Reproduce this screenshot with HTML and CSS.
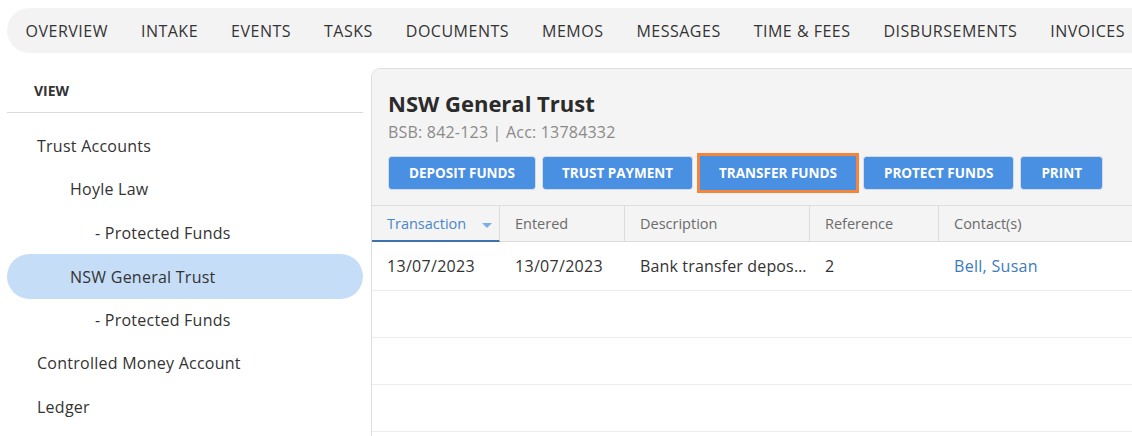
FILE: index.html
```html
<!DOCTYPE html>
<html>
<head>
<meta charset="utf-8">
<link rel="stylesheet" href="styles.css">
</head>
<body>
<nav class="topnav">
  <a class="tab">OVERVIEW</a>
  <a class="tab">INTAKE</a>
  <a class="tab">EVENTS</a>
  <a class="tab">TASKS</a>
  <a class="tab">DOCUMENTS</a>
  <a class="tab">MEMOS</a>
  <a class="tab">MESSAGES</a>
  <a class="tab">TIME &amp; FEES</a>
  <a class="tab">DISBURSEMENTS</a>
  <a class="tab">INVOICES</a>
</nav>
<div class="layout">
  <aside class="sidebar">
    <div class="side-head">VIEW</div>
    <ul class="side-list">
      <li class="lvl1">Trust Accounts</li>
      <li class="lvl2">Hoyle Law</li>
      <li class="lvl3">- Protected Funds</li>
      <li class="lvl2 selected">NSW General Trust</li>
      <li class="lvl3">- Protected Funds</li>
      <li class="lvl1">Controlled Money Account</li>
      <li class="lvl1">Ledger</li>
    </ul>
  </aside>
  <main class="panel">
    <div class="panel-head">
      <h1 class="title">NSW General Trust</h1>
      <div class="subtitle">BSB: 842-123 | Acc: 13784332</div>
      <div class="actions">
        <button class="btn">DEPOSIT FUNDS</button>
        <button class="btn">TRUST PAYMENT</button>
        <button class="btn highlighted">TRANSFER FUNDS</button>
        <button class="btn">PROTECT FUNDS</button>
        <button class="btn">PRINT</button>
      </div>
    </div>
    <div class="table">
      <div class="thead">
        <div class="th c1 sorted">Transaction<span class="caret"></span></div>
        <div class="th c2">Entered</div>
        <div class="th c3">Description</div>
        <div class="th c4">Reference</div>
        <div class="th c5">Contact(s)</div>
      </div>
      <div class="tr">
        <div class="td c1">13/07/2023</div>
        <div class="td c2">13/07/2023</div>
        <div class="td c3">Bank transfer deposit received</div>
        <div class="td c4">2</div>
        <div class="td c5"><a class="link">Bell, Susan</a></div>
      </div>
      <div class="tr"></div>
      <div class="tr"></div>
      <div class="tr"></div>
    </div>
  </main>
</div>
</body>
</html>
```
FILE: styles.css
```css
* { box-sizing: border-box; }
html, body { margin: 0; padding: 0; background: #fff; }
body {
  font-family: "Open Sans", "Noto Sans", sans-serif;
  color: #333;
  padding: 8px 0 0 7px;
  width: 1132px;
  height: 436px;
  overflow: hidden;
}
.topnav {
  display: flex;
  align-items: center;
  height: 45px;
  background: #f3f3f3;
  border-radius: 23px 0 0 23px;
  padding-left: 2px;
  white-space: nowrap;
}
.tab {
  padding: 0 16.5px;
  font-size: 16px;
  color: #333;
  letter-spacing: 0.5px;
}
.layout {
  display: flex;
  margin-top: 15px;
}
.sidebar {
  width: 356px;
  flex: none;
}
.side-head {
  height: 45px;
  line-height: 45px;
  padding-left: 27px;
  font-size: 14px;
  font-weight: 700;
  color: #333;
  border-bottom: 1px solid #dcdcdc;
}
.side-list {
  list-style: none;
  margin: 11px 0 0;
  padding: 0;
}
.side-list li {
  height: 43.5px;
  display: flex;
  align-items: center;
  font-size: 16px;
  letter-spacing: 0.25px;
  color: #333;
  border-radius: 23px;
}
.lvl1 { padding-left: 30px; }
.lvl2 { padding-left: 63px; }
.lvl3 { padding-left: 88px; }
.side-list li.selected { background: #c6ddf7; height: 45px; margin: -0.5px 0 -1px; }
.panel {
  flex: 1;
  margin-left: 8px;
  border: 1px solid #dedede;
  border-right: none;
  border-bottom: none;
  border-top-left-radius: 9px;
  overflow: hidden;
  height: 400px;
}
.panel-head {
  background: #f4f4f4;
  padding: 19px 16px 15px;
  border-bottom: 1px solid #dedede;
}
.title {
  margin: 0;
  font-size: 22px;
  font-weight: 700;
  line-height: 30px;
  color: #2b2b2b;
}
.subtitle {
  font-size: 16px;
  color: #8a8a8a;
  line-height: 26px;
  margin-top: 1px;
  letter-spacing: 0.2px;
}
.actions {
  display: flex;
  gap: 6px;
  margin-top: 11px;
}
.btn {
  height: 34px;
  padding: 0 20px;
  border: 1px solid #d3dce6;
  border-radius: 3px;
  background: #4a90e2;
  background-clip: padding-box;
  color: #fff;
  font-family: "Open Sans", "Noto Sans", sans-serif;
  font-size: 13.5px;
  font-weight: 700;
  white-space: nowrap;
}
.btn:nth-child(2) { padding: 0 19px; }
.btn.highlighted {
  border-color: #4a90e2;
  box-shadow: 0 0 0 3px #f3853d;
  border-radius: 0;
  padding: 0 18px;
  margin: 0 1px;
}
.thead {
  display: flex;
  height: 36px;
  background: #f4f4f4;
  border-bottom: 1px solid #dcdcdc;
}
.th {
  display: flex;
  align-items: center;
  padding-left: 15px;
  font-size: 14.5px;
  color: #6b6b6b;
  border-right: 1px solid #dcdcdc;
}
.th.c5 { border-right: none; }
.th.sorted {
  color: #4a86c8;
  border-bottom: 2px solid #3f72ad;
  margin-bottom: -1px;
  position: relative;
}
.caret {
  position: absolute;
  right: 7px;
  top: 17px;
  width: 0;
  height: 0;
  border-left: 5px solid transparent;
  border-right: 5px solid transparent;
  border-top: 5px solid #7ab0ea;
}
.c1 { width: 128px; }
.c2 { width: 125px; }
.c3 { width: 185px; }
.c4 { width: 129px; }
.c5 { flex: 1; }
.tr {
  display: flex;
  height: 47px;
  border-bottom: 1px solid #ececec;
}
.tr:nth-child(2) { height: 49px; }
.td {
  display: flex;
  align-items: center;
  padding-left: 15px;
  padding-right: 4px;
  font-size: 16px;
  letter-spacing: 0.3px;
  color: #333;
  overflow: hidden;
  white-space: nowrap;
}
.td.c3 { display: block; line-height: 48px; text-overflow: ellipsis; padding-right: 1px; letter-spacing: 0.15px; }
.link { color: #3b7bc2; }
```
